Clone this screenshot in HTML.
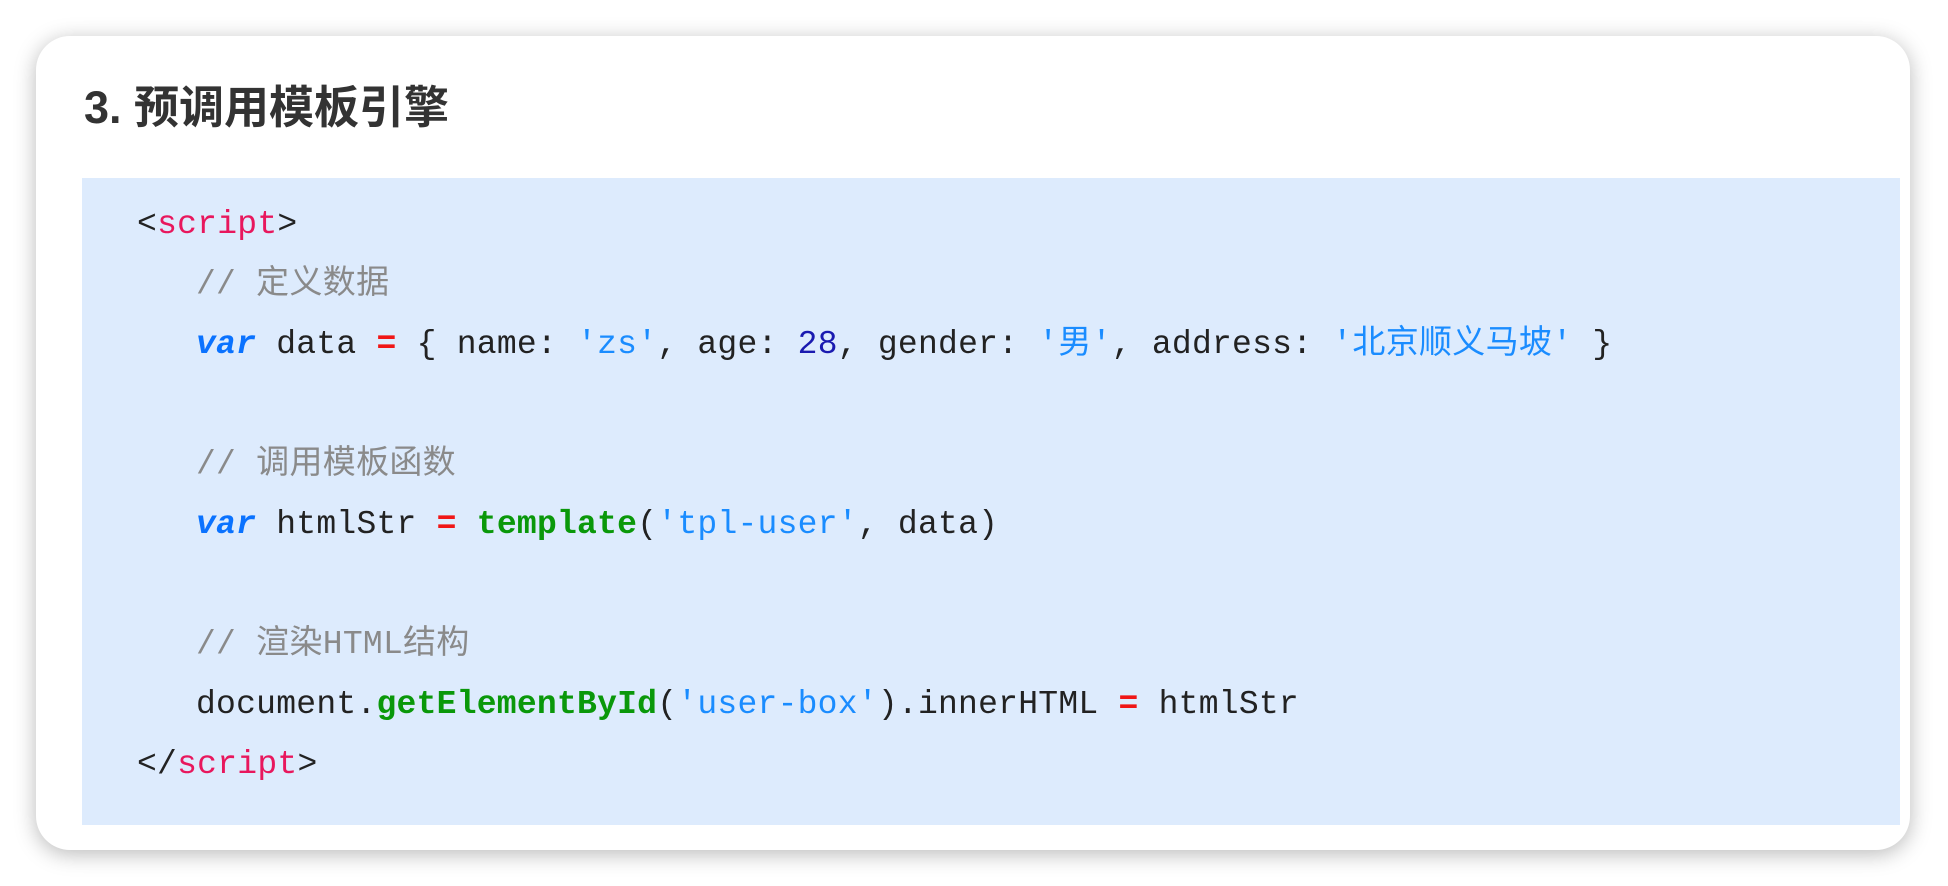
<!DOCTYPE html>
<html><head><meta charset="utf-8"><style>
html,body{margin:0;padding:0;background:#fff;width:1948px;height:886px;overflow:hidden}
.card{position:absolute;left:36px;top:36px;width:1874px;height:814px;background:#fff;border-radius:34px;box-shadow:0 4px 22px rgba(0,0,0,0.28)}
h1{position:absolute;left:48px;top:43px;margin:0;font:bold 45px/58px "Liberation Sans","Noto Sans CJK SC",sans-serif;color:#333}
.code{position:absolute;left:46px;top:142px;width:1818px;height:647px;background:#ddebfd}
.lines{position:absolute;left:55px;top:17px;font-family:"Liberation Mono","Noto Sans CJK SC",monospace;font-size:33px;line-height:60px;color:#222;white-space:pre;letter-spacing:0.25px}
.c{letter-spacing:0.3px}
.ind{padding-left:59px}
.tag{color:#e8175d}
.cm{color:#8a8a8a}
.kw{color:#0a72ff;font-weight:bold;font-style:italic}
.op{color:#f01616;font-weight:bold}
.str{color:#1a8cff}
.num{color:#1a1ab0}
.fn{color:#0a980a;font-weight:bold}
</style></head><body>
<div class="card">
<h1>3. 预调用模板引擎</h1>
<div class="code"><div class="lines">&lt;<span class="tag">script</span>&gt;
<span class="ind cm">// <span class="c">定义数据</span></span>
<span class="ind"><span class="kw">var</span> data <span class="op">=</span> { name: <span class="str">'zs'</span>, age: <span class="num">28</span>, gender: <span class="str">'<span class="c">男</span>'</span>, address: <span class="str">'<span class="c">北京顺义马坡</span>'</span> }</span>

<span class="ind cm">// <span class="c">调用模板函数</span></span>
<span class="ind"><span class="kw">var</span> htmlStr <span class="op">=</span> <span class="fn">template</span>(<span class="str">'tpl-user'</span>, data)</span>

<span class="ind cm">// <span class="c">渲染</span>HTML<span class="c">结构</span></span>
<span class="ind">document.<span class="fn">getElementById</span>(<span class="str">'user-box'</span>).innerHTML <span class="op">=</span> htmlStr</span>
&lt;/<span class="tag">script</span>&gt;</div></div>
</div>
</body></html>
